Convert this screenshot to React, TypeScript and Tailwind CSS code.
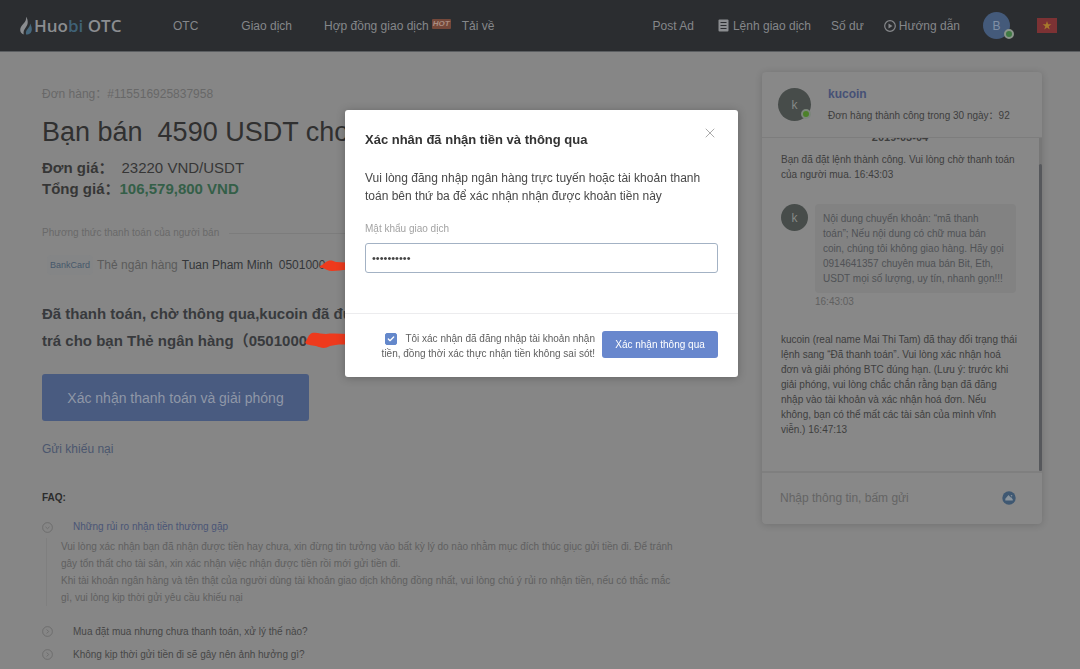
import React, { useState } from "react";
import { Check, X } from "lucide-react";

const faqItems = [
  "Mua đặt mua nhưng chưa thanh toán, xử lý thế nào?",
  "Không kịp thời gửi tiền đi sẽ gây nên ảnh hưởng gì?",
];

function Lines({ lines }: { lines: string[] }) {
  return (
    <>
      {lines.map((line) => (
        <span key={line} className="block whitespace-nowrap">
          {line}
        </span>
      ))}
    </>
  );
}

function Logo() {
  return (
    <a href="#" aria-label="Huobi OTC" className="flex items-center gap-0.5">
      <svg width="12" height="19" viewBox="0 0 12 19" aria-hidden="true">
        <path d="M6 .8C6.600 3.800 5.200 5.800 3.400 7.800 1.500 9.900.2 11.500.2 14c0 2.200 1.300 3.700 3.500 4.400C3.200 15.500 4 14 5.400 12c1.700-2.300 2.600-4.300 2.300-6.800C7.500 3.400 7 2 6 .8z" fill="#8b8d90" />
        <path d="M10 7.600c.2 2-.8 3.400-2 4.900-1.500 1.700-2.500 3.200-2 6C9.400 18.700 11.800 16.500 11.800 13.400c0-2.200-.7-4.200-1.800-5.800z" fill="#46677c" />
      </svg>
      <span className="font-['Open_Sans',sans-serif] text-[17px] leading-6 font-semibold text-[#8b8d90]">
        Huo<span className="text-[#3f6277]">bi</span> OTC
      </span>
    </a>
  );
}

function Header() {
  return (
    <header className="flex h-[52px] items-center border-b border-[#5b5e61] bg-[#2b2d30] pr-[23px] pl-5 text-xs whitespace-nowrap text-[#85878a]">
      <div className="w-[153px]">
        <Logo />
      </div>
      <nav className="flex items-center">
        <a href="#">OTC</a>
        <a href="#" className="ml-[43px]">Giao dịch</a>
        <a href="#" className="ml-8 flex items-center gap-[3px]">
          Hợp đồng giao dịch
          <span className="mb-[3px] w-[19px] rounded-[1px] bg-[#75483a] text-center text-[8px] leading-[10px] font-bold text-[#a98c80] italic">HOT</span>
        </a>
        <a href="#" className="ml-[11px]">Tải về</a>
      </nav>
      <nav className="ml-auto flex items-center">
        <a href="#">Post Ad</a>
        <a href="#" className="ml-6 flex items-center gap-1">
          <svg width="11" height="13" viewBox="0 0 11 13" aria-hidden="true">
            <rect x=".5" y=".5" width="10" height="12" rx="1" fill="#8b8d90" />
            <path d="M2.500 3.500h6M2.500 6.500h6M2.500 9.500h6" stroke="#2b2d30" strokeWidth="1.200" />
          </svg>
          Lệnh giao dịch
        </a>
        <a href="#" className="ml-5">Số dư</a>
        <a href="#" className="ml-5 flex items-center gap-[3px]">
          <svg width="12" height="12" viewBox="0 0 12 12" aria-hidden="true">
            <circle cx="6" cy="6" r="5.300" fill="none" stroke="#85878a" strokeWidth="1.200" />
            <path d="M4.500 3.500 8.500 6l-4 2.500z" fill="#85878a" />
          </svg>
          Hướng dẫn
        </a>
        <button type="button" aria-label="Tài khoản" className="relative ml-[23px] size-[27px] rounded-full bg-[#445a7a] text-xs text-[#8090a5]">
          B
          <span className="absolute -right-1 bottom-0 size-[10px] rounded-full border-2 border-[#8a948a] bg-[#3f7a43]" />
        </button>
        <button type="button" aria-label="Tiếng Việt" className="ml-[27px]">
          <svg width="20" height="15" viewBox="0 0 20 15" aria-hidden="true">
            <rect width="20" height="15" fill="#7c3234" />
            <path d="m10 3 1.100 3.200h3.300l-2.700 2 1 3.200L10 9.500l-2.700 1.900 1-3.200-2.700-2h3.300z" fill="#a8792c" />
          </svg>
        </button>
      </nav>
    </header>
  );
}

function StepIcon({ open = false }: { open?: boolean }) {
  return (
    <svg width="11" height="11" viewBox="0 0 11 11" fill="none" stroke="#686868" strokeWidth=".8" aria-hidden="true">
      <circle cx="5.500" cy="5.500" r="4.900" />
      <path d={open ? "M3.500 4.800 5.500 6.700l2-1.900" : "M4.700 3.500 6.600 5.500l-1.900 2"} />
    </svg>
  );
}

function Order() {
  return (
    <main className="min-w-0 flex-1 pt-[34px] whitespace-nowrap">
      <p className="text-xs leading-4 text-[#686868]">Đơn hàng：#115516925837958</p>
      <h1 className="mt-3 text-[27px] leading-9 text-[#303030]">Bạn bán&nbsp; 4590 USDT cho kucoin</h1>
      <dl className="mt-[7px] text-[15px] leading-[21px] text-[#363636]">
        <div className="flex gap-2">
          <dt className="font-bold">Đơn giá：</dt>
          <dd>23220 VND/USDT</dd>
        </div>
        <div className="flex">
          <dt className="font-bold">Tổng giá：</dt>
          <dd className="font-bold text-[#345f48]">106,579,800 VND</dd>
        </div>
      </dl>
      <div className="mt-[26px] flex items-center gap-2.5 text-[10px] leading-4 text-[#696969]">
        Phương thức thanh toán của người bán
        <span className="h-px flex-1 bg-[#7c7c7c]" />
      </div>
      <div className="mt-[14px] flex h-5 items-center text-xs text-[#343639]">
        <span className="ml-[5px] rounded-sm bg-[#848586] px-[3px] text-[9px] leading-5 text-[#46586b]">BankCard</span>
        <span className="ml-1 text-[#5b5b5b]">Thẻ ngân hàng</span>
        <span className="ml-1">Tuan Pham Minh</span>
        <span className="relative ml-1.5">
          0501000
          <svg className="absolute top-0.5 left-10" width="34" height="13" viewBox="0 0 34 13" aria-hidden="true">
            <path d="M1 7C4 6 6 3 9 2c3-1 5 0 8 1 5 0 10 1 16 0v8c-8-1-13 1-20 1-4 0-6-2-9-3-2 0-4-1-3-2z" fill="#ee3a1d" />
          </svg>
        </span>
      </div>
      <p className="mt-[25px] text-[15px] leading-[27px] font-bold text-[#383a3d]">
        Đã thanh toán, chờ thông qua,kucoin đã được
        <br />
        trá cho bạn Thẻ ngân hàng（
        <span className="relative">
          0501000
          <svg className="absolute top-0 right-[-42px]" width="44" height="17" viewBox="0 0 44 17" aria-hidden="true">
            <path d="M1 9C3 6 3 3 7 1c5-1 9 1 14 1 8-1 15 0 23 0v11c-8-1-14 0-19 1-5 3-9 2-14 0-5-1-13-1-10-5z" fill="#ee3a1d" />
          </svg>
        </span>
      </p>
      <button type="button" className="mt-5 block h-[47px] w-[267px] rounded-[3px] bg-[#495b80] text-sm text-[#8f97a7]">
        Xác nhận thanh toán và giải phóng
      </button>
      <a href="#" className="mt-5 block w-fit text-xs leading-4 text-[#4b566e]">Gửi khiếu nại</a>

      <section className="text-[10px]">
        <h2 className="mt-[33px] leading-4 font-bold text-[#2c2c2c]">FAQ:</h2>
        <button type="button" className="mt-[11px] flex items-center gap-5 leading-5 text-[#4a5576]">
          <StepIcon open />
          Những rủi ro nhận tiền thường gặp
        </button>
        <p className="mt-px ml-1 border-l border-[#7f7f7f] pl-[14px] leading-[17px] text-[#606060]">
          <Lines
            lines={[
              "Vui lòng xác nhận bạn đã nhận được tiền hay chưa, xin đừng tin tưởng vào bất kỳ lý do nào nhằm mục đích thúc giục gửi tiền đi. Để tránh",
              "gây tổn thất cho tài sản, xin xác nhận việc nhận được tiền rồi mới gửi tiền đi.",
              "Khi tài khoản ngân hàng và tên thật của người dùng tài khoản giao dịch không đồng nhất, vui lòng chú ý rủi ro nhận tiền, nếu có thắc mắc",
              "gì, vui lòng kịp thời gửi yêu cầu khiếu nại",
            ]}
          />
        </p>
        <div className="mt-[14px]">
          {faqItems.map((question) => (
            <button key={question} type="button" className="flex items-center gap-5 leading-[23px] text-[#474747]">
              <StepIcon />
              {question}
            </button>
          ))}
        </div>
      </section>
    </main>
  );
}

function Chat() {
  return (
    <aside className="mt-5 flex w-[280px] shrink-0 flex-col self-start rounded-sm bg-[#888] text-[10px] text-[#3e3e3e] shadow-[0_1px_7px_rgba(0,0,0,0.16)]">
      <div className="flex h-[66px] items-center gap-[17px] border-b border-[#7d7d7d] pl-4">
        <div className="relative flex size-[33px] items-center justify-center rounded-full bg-[#474c4a] text-xs text-[#858987]">
          k
          <span className="absolute right-0 bottom-0.5 size-2.5 rounded-full border-2 border-[#7c867c] bg-[#4c8129]" />
        </div>
        <div className="whitespace-nowrap">
          <a href="#" className="block text-xs leading-[22px] font-bold text-[#465176]">kucoin</a>
          <p className="leading-[22px]">Đơn hàng thành công trong 30 ngày：92</p>
        </div>
      </div>
      <div className="flex h-[333px] overflow-hidden">
        <div className="flex-1 pl-[19px] leading-[15px]">
          <p className="-mt-2 pr-5 text-center text-[11px] leading-[15px] font-bold">2019-03-04</p>
          <p className="mt-[7px]">
            <Lines lines={["Bạn đã đặt lệnh thành công. Vui lòng chờ thanh toán", "của người mua. 16:43:03"]} />
          </p>
          <div className="mt-[22px] flex items-start gap-[7px]">
            <span className="flex size-[27px] items-center justify-center rounded-full bg-[#474c4a] text-xs text-[#858987]">k</span>
            <div>
              <p className="w-[201px] rounded-sm bg-[#828282] px-2 py-[7px] text-[#505256]">
                <Lines
                  lines={[
                    "Nội dung chuyển khoản: “mã thanh",
                    "toán”; Nếu nội dung có chữ mua bán",
                    "coin, chúng tôi không giao hàng. Hãy gọi",
                    "0914641357 chuyên mua bán Bit, Eth,",
                    "USDT mọi số lượng, uy tín, nhanh gọn!!!",
                  ]}
                />
              </p>
              <time className="mt-px block text-[#606060]">16:43:03</time>
            </div>
          </div>
          <p className="mt-[23px]">
            <Lines
              lines={[
                "kucoin (real name Mai Thi Tam) đã thay đổi trạng thái",
                "lệnh sang “Đã thanh toán”. Vui lòng xác nhận hoá",
                "đơn và giải phóng BTC đúng hạn. (Lưu ý: trước khi",
                "giải phóng, vui lòng chắc chắn rằng bạn đã đăng",
                "nhập vào tài khoản và xác nhận hoá đơn. Nếu",
                "không, bạn có thể mất các tài sản của mình vĩnh",
                "viễn.) 16:47:13",
              ]}
            />
          </p>
        </div>
        <div className="w-[3px] bg-[#777] pt-[26px]">
          <div className="h-full rounded-full bg-[#56585c]" />
        </div>
      </div>
      <form className="flex h-[53px] items-center border-t-2 border-[#7f7f7f] pr-[26px] pb-0.5 pl-[18px]" onSubmit={(e) => e.preventDefault()}>
        <input aria-label="Nhập thông tin" placeholder="Nhập thông tin, bấm gửi" className="min-w-0 flex-1 bg-transparent text-xs outline-none placeholder:text-[#646464]" />
        <button type="submit" aria-label="Gửi">
          <svg width="14" height="14" viewBox="0 0 14 14" aria-hidden="true">
            <circle cx="7" cy="7" r="6.700" fill="#3f5872" />
            <path d="M3.300 9.500V7.800L6.500 4l2 2.200 1 .2 1.300 2v1.100z" fill="#8b949c" />
            <circle cx="9.500" cy="4.700" r=".8" fill="#8b949c" />
          </svg>
        </button>
      </form>
    </aside>
  );
}

function ConfirmDialog() {
  const [password, setPassword] = useState("0123456789");
  const [agreed, setAgreed] = useState(true);
  return (
    <div className="fixed inset-0 flex items-start justify-center pt-[110px] pl-[3px]">
      <div role="dialog" aria-labelledby="confirm-title" className="w-[393px] rounded-[3px] bg-white shadow-[0_1px_8px_rgba(0,0,0,0.25)]">
        <div className="px-5 pt-[15px] pb-10">
          <div className="flex items-start justify-between">
            <h2 id="confirm-title" className="pt-[5px] text-[13px] leading-5 font-bold text-[#333]">Xác nhân đã nhận tiền và thông qua</h2>
            <button type="button" aria-label="Đóng" className="text-[#a5a5a5]">
              <X size={16} strokeWidth={1.4} />
            </button>
          </div>
          <p className="mt-[19px] text-xs leading-[18px] text-[#484848]">
            <Lines lines={["Vui lòng đăng nhập ngân hàng trực tuyến hoặc tài khoản thanh", "toán bên thứ ba để xác nhận nhận được khoản tiền này"]} />
          </p>
          <label htmlFor="trade-password" className="mt-4 block text-[10px] leading-4 text-[#a3a3a3]">Mật khẩu giao dịch</label>
          <input
            id="trade-password"
            type="password"
            value={password}
            onChange={(e) => setPassword(e.target.value)}
            className="mt-1.5 block h-[30px] w-full rounded-[3px] border border-[#a3b2c4] px-1.5 text-[11px] text-[#444] outline-none"
          />
        </div>
        <div className="flex items-start justify-end gap-[7px] border-t border-[#ececee] px-5 pt-[17px] pb-4 text-[10px]">
          <label className="text-right leading-[15px] whitespace-nowrap text-[#606060]">
            <span className="relative mr-2 inline-block size-3 align-middle">
              <input
                type="checkbox"
                checked={agreed}
                onChange={(e) => setAgreed(e.target.checked)}
                className="block size-3 appearance-none rounded-[2px] border border-[#6488cb] checked:bg-[#6488cb]"
              />
              {agreed && <Check className="pointer-events-none absolute inset-0.5 text-white" size={8} strokeWidth={4} />}
            </span>
            Tôi xác nhận đã đăng nhập tài khoản nhận
            <br />
            tiền, đồng thời xác thực nhận tiền không sai sót!
          </label>
          <button type="button" className="h-[27px] w-[116px] rounded-[3px] bg-[#6887cd] text-white">Xác nhận thông qua</button>
        </div>
      </div>
    </div>
  );
}

export default function App() {
  return (
    <div className="min-h-screen overflow-hidden bg-[#868686] font-['Liberation_Sans','Noto_Sans_CJK_SC',sans-serif]">
      <Header />
      <div className="flex gap-10 pr-[38px] pl-[42px]">
        <Order />
        <Chat />
      </div>
      <ConfirmDialog />
    </div>
  );
}
